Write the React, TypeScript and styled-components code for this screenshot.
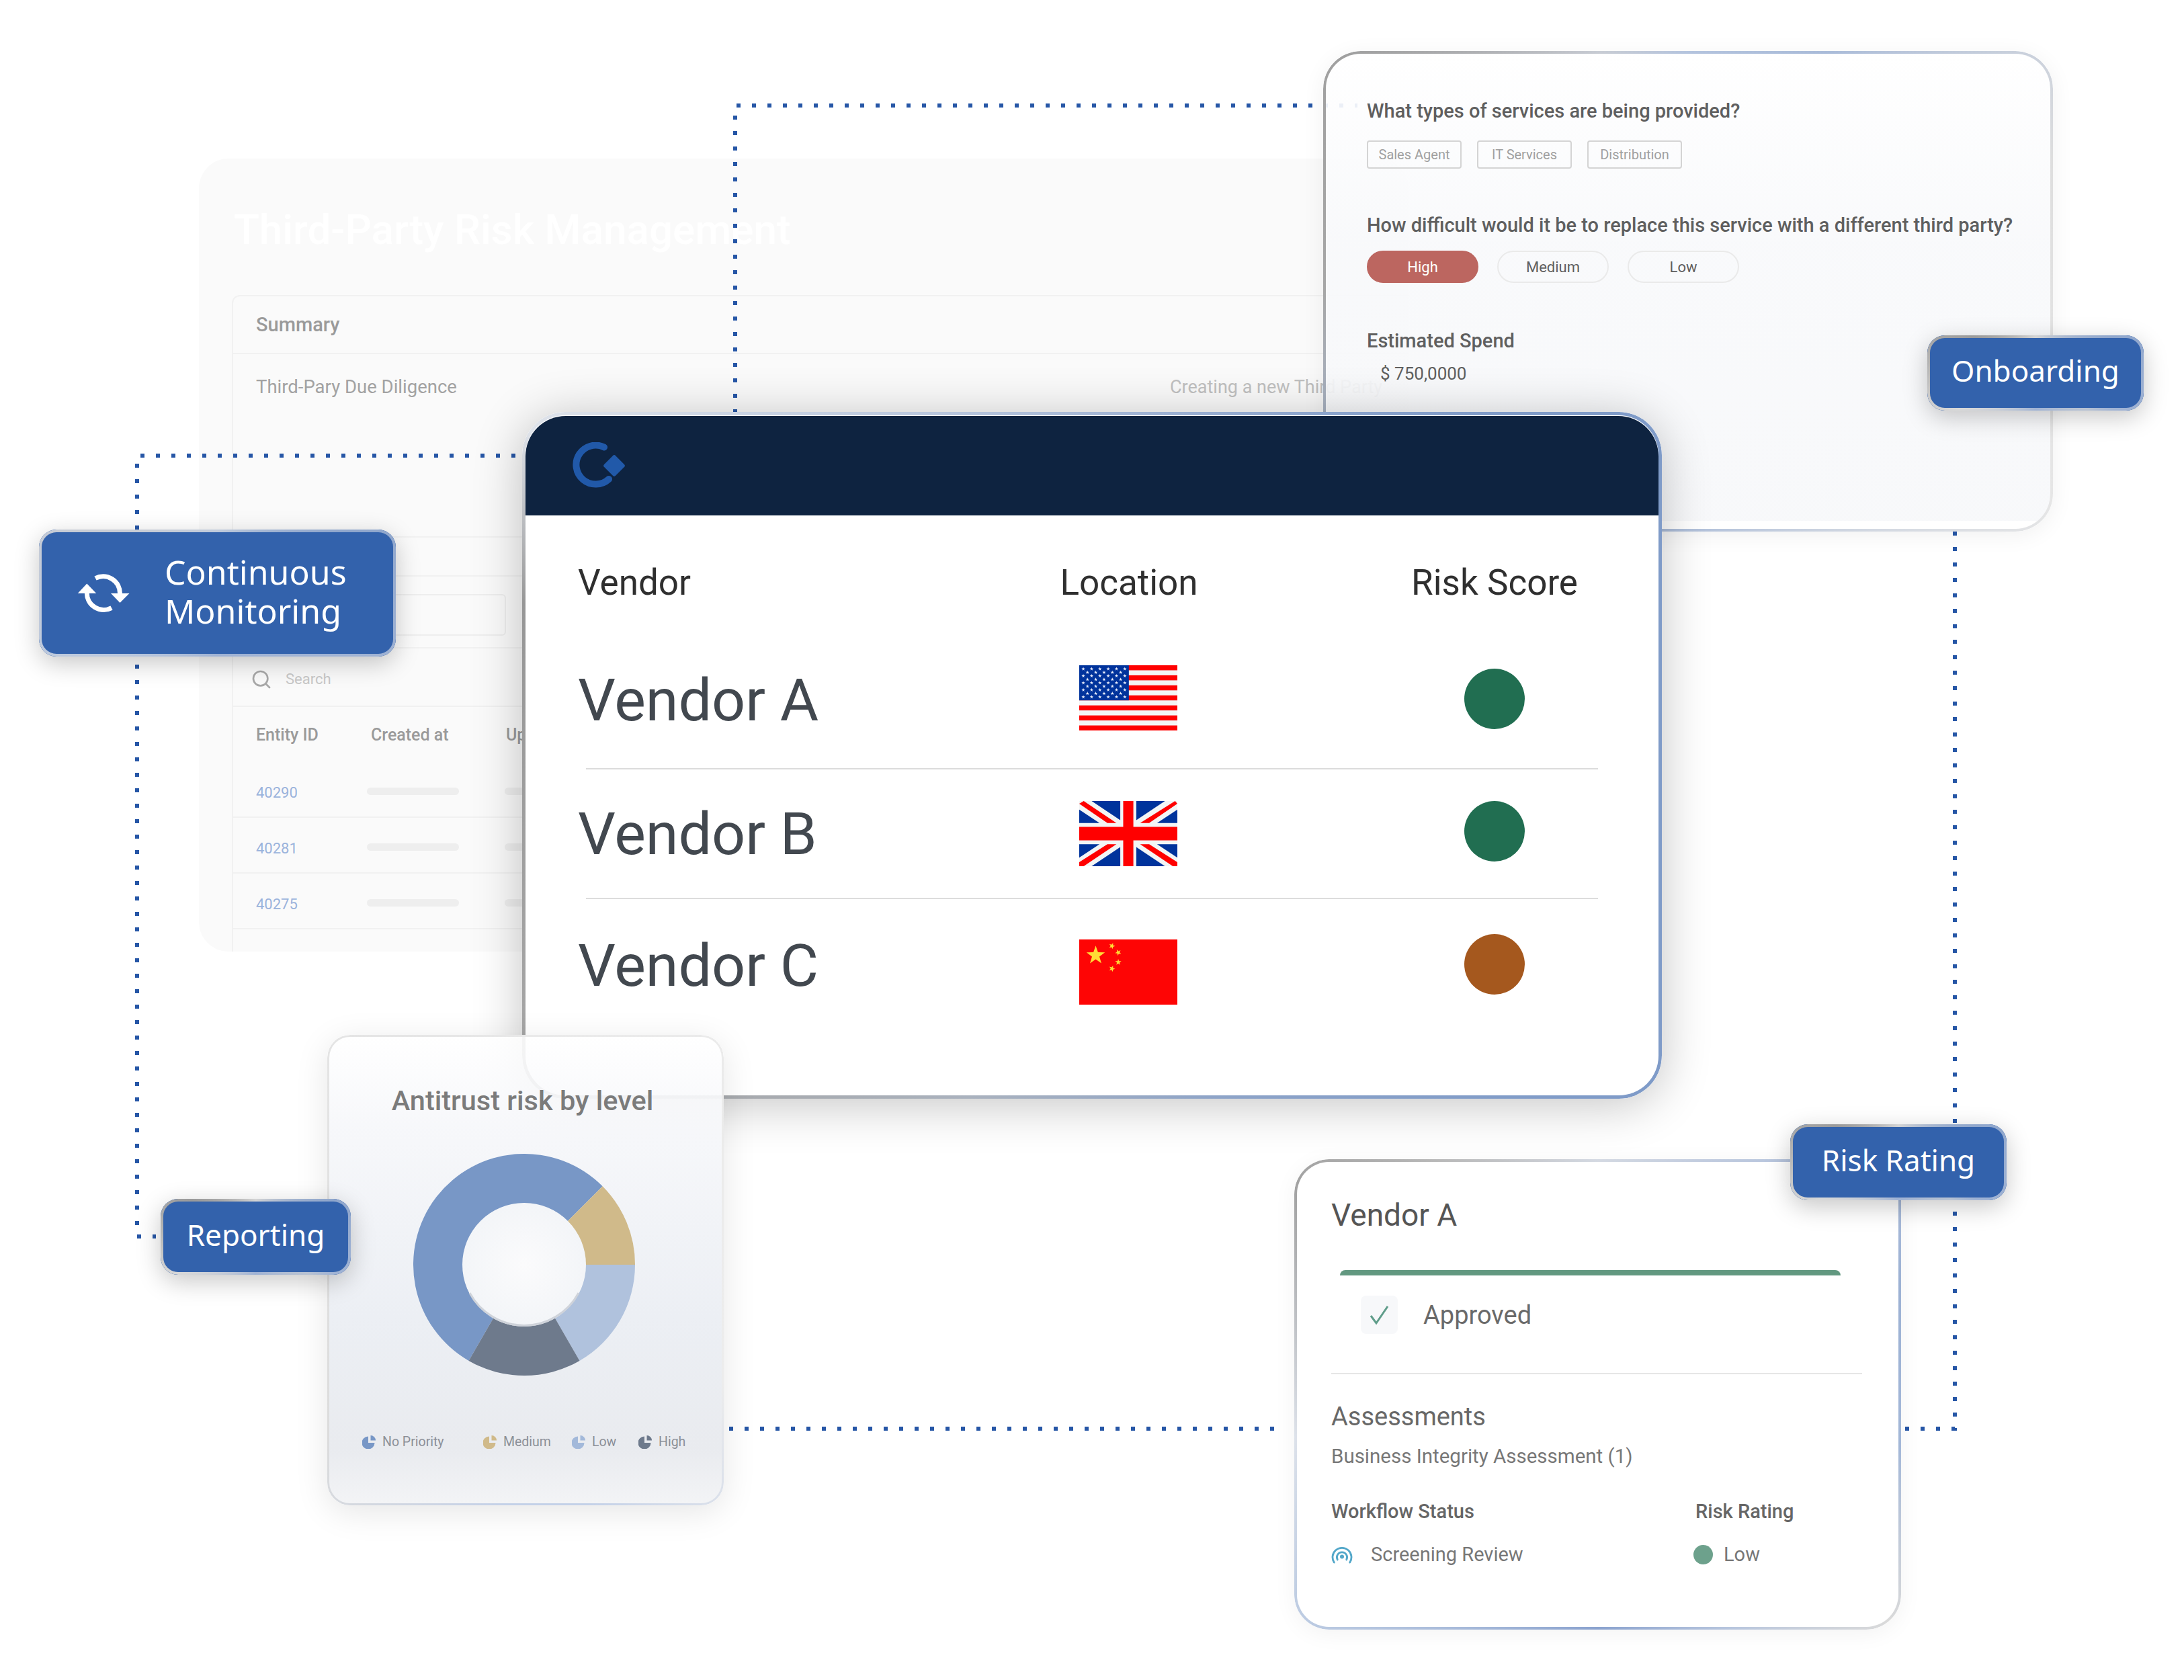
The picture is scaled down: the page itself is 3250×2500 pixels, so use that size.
import React from "react";
import styled, { createGlobalStyle } from "styled-components";
import { Search } from "lucide-react";

const Global = createGlobalStyle`
  html, body { margin: 0; padding: 0; background: #fff; }
  body { font-family: Roboto, "Liberation Sans", sans-serif; }
`;

const Canvas = styled.div`
  position: relative;
  width: 3250px;
  height: 2500px;
  overflow: hidden;
  background: #fff;
`;

/* ---------- free-floating windows on the canvas ---------- */
const Glass = styled.section`
  position: absolute;
  box-sizing: border-box;
  &::before {
    content: "";
    position: absolute;
    inset: 0;
    z-index: 5;
    border-radius: inherit;
    padding: var(--edge-w);
    background: var(--edge);
    mask: linear-gradient(#000 0 0) content-box exclude, linear-gradient(#000 0 0);
    pointer-events: none;
  }
`;

const GhostPanel = styled.section`
  position: absolute;
  left: 296px;
  top: 236px;
  width: 1800px;
  height: 1180px;
  border-radius: 44px;
  background: #fafafa;
  overflow: hidden;
  z-index: 1;
`;
const GhostTitle = styled.h1`
  margin: 0 0 0 52px;
  height: 203px;
  box-sizing: border-box;
  padding-top: 8px;
  display: flex;
  align-items: center;
  font-size: 62px;
  font-weight: 500;
  color: #fff;
`;
const SummaryPanel = styled.div`
  margin-left: 49px;
  height: 1000px;
  border: 2px solid #f1f1f1;
  border-right: 0;
  border-bottom: 0;
  border-top-left-radius: 12px;
`;
const SummaryHead = styled.div`
  height: 84px;
  box-sizing: content-box;
  padding-left: 34px;
  display: flex;
  align-items: center;
  font-size: 29px;
  font-weight: 500;
  color: #9a9a9a;
  border-bottom: 2px solid #f1f1f1;
`;
const SummaryRow = styled.div`
  height: 273px;
  box-sizing: border-box;
  padding: 29px 0 0 34px;
  display: grid;
  grid-template-columns: 1360px 1fr;
  font-size: 27.5px;
  line-height: 40px;
  color: #a2a2a2;
  border-bottom: 2px solid #f1f1f1;
`;
const FaintText = styled.span`
  color: #c0c0c0;
  font-size: 27px;
  white-space: nowrap;
`;
const EmptyBand = styled.div`
  height: 56px;
  border-bottom: 2px solid #f1f1f1;
`;
const InputBand = styled.div`
  height: 107px;
  box-sizing: border-box;
  padding: 26px 0 0 34px;
  border-bottom: 2px solid #f1f1f1;
`;
const GhostInput = styled.div`
  width: 368px;
  height: 58px;
  border: 2px solid #eee;
  border-radius: 6px;
`;
const SearchBand = styled.div`
  height: 87px;
  box-sizing: border-box;
  padding: 6px 0 0 26px;
  display: flex;
  align-items: center;
  gap: 20px;
  font-size: 22px;
  color: #c8c8c8;
  border-bottom: 2px solid #f1f1f1;
`;
const TableHead = styled.div`
  height: 82px;
  box-sizing: border-box;
  padding: 0 0 0 34px;
  display: grid;
  grid-template-columns: 171px 201px 100px;
  align-items: center;
  font-size: 25px;
  font-weight: 500;
  color: #9a9a9a;
`;
const TableRow = styled.div`
  height: 83px;
  box-sizing: border-box;
  padding: 6px 0 0 34px;
  display: grid;
  grid-template-columns: 165px 205px 100px;
  align-items: center;
  font-size: 22px;
  color: #9ab3dc;
  border-bottom: 2px solid #f1f1f1;
`;
const EntityId = styled.span`
  margin-top: 4px;
`;
const GhostBar = styled.div<{ $w: number }>`
  width: ${(p) => p.$w}px;
  height: 11px;
  border-radius: 6px;
  background: #eeeeee;
`;

const Connectors = styled.svg`
  position: absolute;
  left: 0;
  top: 0;
  z-index: 2;
`;

const TopCard = styled(Glass)`
  left: 1969px;
  top: 76px;
  width: 1086px;
  height: 715px;
  padding: 69px 0 0 65px;
  border-radius: 56px;
  z-index: 3;
  --edge-w: 4px;
  --edge: conic-gradient(#b4c4de 0deg, #a9bbd9 30deg, #dedede 70deg, #e6e6e6 120deg, #a8bad8 190deg, #a8bad8 235deg, #a6a6a6 270deg, #a0a0a0 305deg, #c8ccd4 340deg, #b4c4de 360deg);
  background: linear-gradient(to bottom, rgba(255,255,255,.92) 0%, rgba(248,249,251,.9) 40%, rgba(247,248,250,.93) 97.7%, #fff 97.7%);
  box-shadow: 0 6px 34px rgba(0,0,0,.06);
`;
const Question = styled.h3<{ $mt?: number }>`
  margin: ${(p) => p.$mt ?? 0}px 0 0;
  font-size: 29px;
  line-height: 40px;
  font-weight: 500;
  color: #5f5f5f;
  white-space: nowrap;
`;
const ChipRow = styled.div`
  display: flex;
  gap: 23px;
  margin-top: 24px;
`;
const Chip = styled.span`
  width: 141px;
  height: 42px;
  box-sizing: border-box;
  border: 2px solid #d4d4d4;
  border-radius: 4px;
  display: flex;
  align-items: center;
  justify-content: center;
  font-size: 20px;
  color: #a0a0a0;
`;
const PillRow = styled.div`
  display: flex;
  gap: 28px;
  margin-top: 18px;
`;
const Pill = styled.span<{ $active?: boolean }>`
  width: 166px;
  height: 48px;
  box-sizing: border-box;
  border-radius: 24px;
  border: 2px solid ${(p) => (p.$active ? "#bc6660" : "#eaeaea")};
  background: ${(p) => (p.$active ? "#bc6660" : "transparent")};
  color: ${(p) => (p.$active ? "#fff" : "#5f5f5f")};
  display: flex;
  align-items: center;
  justify-content: center;
  font-size: 22px;
`;
const SpendValue = styled.div`
  margin: 11px 0 0 20px;
  font-size: 26px;
  line-height: 36px;
  color: #5f5f5f;
`;

const MainCard = styled(Glass)`
  left: 777px;
  top: 613px;
  width: 1696px;
  height: 1022px;
  padding: 5px;
  border-radius: 64px;
  background: #fff;
  z-index: 4;
  --edge-w: 5px;
  --edge: conic-gradient(#a6b8d6 0deg, #7f9bc8 50deg, #7f9bc8 125deg, #8ea4c8 160deg, #aab2be 200deg, #a6a6a6 240deg, #969696 285deg, #dfe3ea 300deg, #c9d3e3 315deg, #a6b8d6 360deg);
  box-shadow: 0 8px 72px rgba(0,0,0,.24);
`;
const MainHeader = styled.header`
  height: 148px;
  margin-top: 1px;
  background: #0e2340;
  border-radius: 60px 60px 0 0;
  padding-left: 68px;
  display: flex;
  align-items: center;
`;
const VendorGrid = styled.div<{ $h: number }>`
  padding-left: 78px;
  display: grid;
  grid-template-columns: 476px 688px 400px;
  align-items: center;
  height: ${(p) => p.$h}px;
`;
const HeadGrid = styled(VendorGrid)`
  box-sizing: border-box;
  padding-top: 26px;
  font-size: 53px;
  color: #2f2f2f;
`;
const Centered = styled.div`
  display: flex;
  justify-content: center;
  align-items: center;
`;
const VendorName = styled.div`
  font-size: 88px;
  line-height: 100px;
  color: #42484f;
  white-space: nowrap;
`;
const FlagSvg = styled.svg<{ $shift: number }>`
  width: 146px;
  height: 97px;
  margin: ${(p) => p.$shift}px 2px 0 0;
`;
const ScoreDot = styled.div<{ $c: string; $shift: number }>`
  width: 90px;
  height: 90px;
  margin-top: ${(p) => p.$shift}px;
  border-radius: 50%;
  background: ${(p) => p.$c};
`;
const RowDivider = styled.div`
  margin-left: 90px;
  width: 1506px;
  height: 2px;
  background: #dcdcdc;
`;

const ChartCard = styled(Glass)`
  left: 487px;
  top: 1540px;
  width: 590px;
  height: 700px;
  padding: 70px 0 0 3px;
  border-radius: 34px;
  z-index: 5;
  display: flex;
  flex-direction: column;
  align-items: center;
  --edge-w: 3px;
  --edge: conic-gradient(#eaeaea 0deg, #ececec 120deg, #c4d1e8 165deg, #c4d1e8 185deg, #dcdcdc 230deg, #e8e8e8 360deg);
  background: linear-gradient(to bottom, rgba(255,255,255,.88) 0%, rgba(246,247,250,.92) 20%, #eceff4 60%, #e9ebef 88%, #f3f4f6 100%);
  box-shadow: 0 10px 50px rgba(0,0,0,.1);
`;
const ChartTitle = styled.h2`
  margin: 0 12px 0 0;
  font-size: 41.5px;
  line-height: 56px;
  font-weight: 500;
  color: #7b7b7b;
  white-space: nowrap;
`;
const DonutSvg = styled.svg`
  display: block;
  width: 330px;
  height: 330px;
  margin: 51px 0 0 -8px;
`;
const Legend = styled.div`
  margin-top: 84px;
  width: 100%;
  box-sizing: border-box;
  padding-left: 49px;
  display: grid;
  grid-template-columns: 180px 132px 99px auto;
  font-size: 19.5px;
  line-height: 30px;
  color: #8c9098;
`;
const LegendItem = styled.div`
  display: flex;
  align-items: center;
  gap: 10px;
  white-space: nowrap;
`;
const LegendSvg = styled.svg`
  width: 20px;
  height: 20px;
  flex: none;
`;

const VendorCard = styled(Glass)`
  left: 1926px;
  top: 1725px;
  width: 903px;
  height: 700px;
  padding: 53px 0 0 55px;
  border-radius: 52px;
  background: #fff;
  z-index: 3;
  --edge-w: 4px;
  --edge: conic-gradient(#d4d9e2 0deg, #b0c0dc 48deg, #9db2d4 70deg, #a4b8d8 100deg, #dadada 128deg, #b8c6de 150deg, #8ba3cf 180deg, #bccbe2 232deg, #dde2ea 262deg, #a2a2a2 305deg, #b8b8b8 325deg, #d4d9e2 360deg);
  box-shadow: 0 6px 34px rgba(0,0,0,.05);
`;
const CardName = styled.h2`
  margin: 0;
  font-size: 46px;
  line-height: 60px;
  font-weight: 400;
  color: #555;
`;
const StatusBar = styled.div`
  margin: 52px 0 0 13px;
  width: 745px;
  height: 8px;
  border-radius: 8px 8px 0 0;
  background: #629880;
`;
const StatusRow = styled.div`
  margin: 30px 0 0 44px;
  display: flex;
  align-items: center;
  gap: 38px;
  font-size: 38px;
  color: #6a6a6a;
`;
const CheckBox = styled.div`
  width: 55px;
  height: 57px;
  border-radius: 8px;
  background: #f7f8fa;
  display: flex;
  align-items: center;
  justify-content: center;
`;
const CardRule = styled.div`
  margin-top: 58px;
  width: 790px;
  height: 2px;
  background: #e6e6e6;
`;
const SectionTitle = styled.h3`
  margin: 38px 0 0;
  font-size: 38px;
  line-height: 50px;
  font-weight: 400;
  color: #686868;
`;
const SectionSub = styled.div`
  margin-top: 14px;
  font-size: 29.5px;
  line-height: 40px;
  color: #777;
`;
const InfoGrid = styled.div`
  margin-top: 42px;
  display: grid;
  grid-template-columns: 542px auto;
  row-gap: 24px;
  font-size: 29px;
  line-height: 40px;
  color: #777;
`;
const InfoHead = styled.div`
  font-weight: 500;
  color: #666;
`;
const InfoValue = styled.div`
  display: flex;
  align-items: center;
  white-space: nowrap;
`;
const RadarSvg = styled.svg`
  width: 32px;
  height: 27px;
  margin-right: 27px;
`;
const LowDot = styled.span`
  width: 29px;
  height: 29px;
  border-radius: 50%;
  background: #6da18c;
  margin: 0 16px 0 -3px;
`;

/* ---------- blue labels ---------- */
const Label = styled(Glass)`
  border-radius: 26px;
  z-index: 6;
  background: #3362ac;
  color: #fff;
  font-family: "Noto Sans", sans-serif;
  font-size: 44px;
  padding-bottom: 8px;
  display: flex;
  align-items: center;
  justify-content: center;
  white-space: nowrap;
  --edge-w: 4px;
  --edge: conic-gradient(#d4d4d4 0deg, #8fa6cc 65deg, #a0b3d4 115deg, #b8c2d2 125deg, #9fb2d4 180deg, #d8d8d8 245deg, #b4b4b4 275deg, #9a9a9a 300deg, #d4d4d4 360deg);
  box-shadow: 0 10px 36px rgba(0,0,0,.22);
`;
const ContinuousLabel = styled(Label)`
  left: 58px;
  top: 788px;
  width: 531px;
  height: 189px;
  font-size: 50px;
  padding-bottom: 0;
  justify-content: flex-start;
  padding-left: 57px;
  gap: 52px;
  --edge: conic-gradient(#c0cbdc 0deg, #8fa6cc 65deg, #a0b3d4 115deg, #9fb2d4 180deg, #bcc9de 245deg, #c8ccd4 300deg, #c0cbdc 360deg);
`;
const ContinuousText = styled.div`
  line-height: 58px;
  margin-top: -5px;
`;
const OnboardingLabel = styled(Label)`
  left: 2868px;
  top: 499px;
  width: 322px;
  height: 112px;
`;
const RiskLabel = styled(Label)`
  left: 2664px;
  top: 1673px;
  width: 322px;
  height: 113px;
`;
const ReportingLabel = styled(Label)`
  left: 239px;
  top: 1784px;
  width: 283px;
  height: 113px;
`;
const SyncSvg = styled.svg`
  width: 78px;
  height: 58px;
  flex: none;
`;

/* ---------- drawings ---------- */
const starPts = (cx: number, cy: number, r: number, rot = 0) => {
  const pts: string[] = [];
  for (let i = 0; i < 10; i++) {
    const rad = i % 2 === 0 ? r : r * 0.4;
    const a = ((-90 + rot + i * 36) * Math.PI) / 180;
    pts.push(`${(cx + rad * Math.cos(a)).toFixed(1)},${(cy + rad * Math.sin(a)).toFixed(1)}`);
  }
  return pts.join(" ");
};

const USFlag = ({ shift }: { shift: number }) => {
  const stars: React.ReactNode[] = [];
  for (let row = 0; row < 9; row++) {
    const odd = row % 2 === 1;
    for (let c = 0; c < (odd ? 5 : 6); c++) {
      stars.push(
        <polygon key={`${row}-${c}`} points={starPts(18 + (odd ? 18.4 : 0) + 36.8 * c, 16 + 15.6 * row, 8.5)} fill="#e9eefb" />
      );
    }
  }
  return (
    <FlagSvg $shift={shift} viewBox="0 0 435 290" preserveAspectRatio="none">
      <rect width="435" height="290" fill="#f3f5f5" />
      {Array.from({ length: 7 }, (_, i) => (
        <rect key={i} y={(i * 2 * 290) / 13} width="435" height={290 / 13} fill="#ff0000" />
      ))}
      <rect width="220" height="156" fill="#00339c" />
      {stars}
    </FlagSvg>
  );
};

const UKFlag = ({ shift }: { shift: number }) => (
  <FlagSvg $shift={shift} viewBox="0 0 435 290" preserveAspectRatio="none">
    <rect width="435" height="290" fill="#f3f5f5" />
    <g fill="#00339c">
      <polygon points="55,0 182,0 182,85" />
      <polygon points="253,0 380,0 253,85" />
      <polygon points="0,38 90,98 0,98" />
      <polygon points="435,38 345,98 435,98" />
      <polygon points="0,252 90,192 0,192" />
      <polygon points="435,252 345,192 435,192" />
      <polygon points="55,290 182,290 182,205" />
      <polygon points="253,290 380,290 253,205" />
    </g>
    <g fill="#ff0000">
      <polygon points="0,12 20,0 165,98 125,98" />
      <polygon points="425,0 435,12 310,98 270,98" />
      <polygon points="0,272 125,192 165,192 20,290 0,290" />
      <polygon points="270,192 310,192 435,272 435,290 415,290" />
      <rect x="195" width="45" height="290" />
      <rect y="115" width="435" height="60" />
    </g>
  </FlagSvg>
);

const CNFlag = ({ shift }: { shift: number }) => (
  <FlagSvg $shift={shift} viewBox="0 0 435 290" preserveAspectRatio="none">
    <rect width="435" height="290" fill="#fe0505" />
    <g fill="#ffdc35">
      <polygon points={starPts(73, 71, 43)} />
      <polygon points={starPts(145, 29, 14.5, 20)} />
      <polygon points={starPts(173, 58, 14.5, 45)} />
      <polygon points={starPts(173, 101, 14.5, 0)} />
      <polygon points={starPts(145, 130, 14.5, 20)} />
    </g>
  </FlagSvg>
);

const Logo = () => (
  <svg width="82" height="70" viewBox="0 0 82 70" fill="none">
    <path d="M49 7.5 A29 29 0 1 0 56 55" stroke="#2159a9" strokeWidth="10" strokeLinecap="round" />
    <rect x="52" y="23" width="24" height="24" rx="3" transform="rotate(45 64 35)" fill="#2159a9" />
  </svg>
);

const polar = (r: number, deg: number) => {
  const a = ((deg - 90) * Math.PI) / 180;
  return [165 + r * Math.cos(a), 165 + r * Math.sin(a)];
};
const sector = (from: number, to: number) => {
  const [x1, y1] = polar(165, from);
  const [x2, y2] = polar(165, to);
  const [x3, y3] = polar(88, to);
  const [x4, y4] = polar(88, from);
  const large = to - from > 180 ? 1 : 0;
  return `M${x1} ${y1} A165 165 0 ${large} 1 ${x2} ${y2} L${x3} ${y3} A88 88 0 ${large} 0 ${x4} ${y4} Z`;
};

const Donut = () => (
  <DonutSvg viewBox="0 0 330 330">
    <defs>
      <radialGradient id="hole">
        <stop offset="0%" stopColor="#fbfbfc" />
        <stop offset="100%" stopColor="#f3f5f8" />
      </radialGradient>
    </defs>
    <path d={sector(210, 405)} fill="#7897c6" />
    <path d={sector(45, 90)} fill="#d0ba8a" />
    <path d={sector(90, 150)} fill="#b0c2dd" />
    <path d={sector(150, 210)} fill="#6e7a8c" />
    <circle cx="165" cy="165" r="92" fill="url(#hole)" />
    <path d="M84 207 A92 92 0 0 0 246 207" fill="none" stroke="#cfd3da" strokeWidth="3" />
  </DonutSvg>
);

const PieMark = ({ c }: { c: string }) => (
  <LegendSvg viewBox="0 0 20 20" fill={c}>
    <path d="M9 1.5 A9.5 9.5 0 1 0 18.5 11 H9 Z" />
    <path d="M12.5 0 A7.5 7.5 0 0 1 20 7.5 H12.5 Z" />
  </LegendSvg>
);

const Sync = () => (
  <SyncSvg viewBox="0 0 78 58" fill="none">
    <path d="M27 6.5 A25 25 0 0 1 63.5 29" stroke="#fff" strokeWidth="7" />
    <path d="M14.3 28 A25 25 0 0 0 51 50.6" stroke="#fff" strokeWidth="7" />
    <polygon points="0.7,29 28.3,29 14.3,14.5" fill="#fff" />
    <polygon points="50,29 77.5,29 63.5,43" fill="#fff" />
  </SyncSvg>
);

const Check = () => (
  <svg width="32" height="32" viewBox="0 0 32 32" fill="none">
    <path d="M3 17 L11 28 L28 3" stroke="#5f9d8a" strokeWidth="3" />
  </svg>
);

const Radar = () => (
  <RadarSvg viewBox="0 0 32 27" fill="none" stroke="#52a7c9" strokeWidth="2.8" strokeLinecap="round">
    <path d="M4.3 25 A14 14 0 1 1 27.7 25" />
    <path d="M9.3 21 A7.6 7.6 0 1 1 22.7 21" />
    <circle cx="16" cy="16.5" r="3" fill="#52a7c9" stroke="none" />
  </RadarSvg>
);

const dotted = { stroke: "#2656a6", strokeWidth: 6, strokeDasharray: "6 17", fill: "none" };

export default function App() {
  return (
    <Canvas>
      <Global />

      <GhostPanel>
        <GhostTitle>Third-Party Risk Management</GhostTitle>
        <SummaryPanel>
          <SummaryHead>Summary</SummaryHead>
          <SummaryRow>
            <span>Third-Pary Due Diligence</span>
            <FaintText>Creating a new Third Party</FaintText>
          </SummaryRow>
          <EmptyBand />
          <InputBand>
            <GhostInput />
          </InputBand>
          <SearchBand>
            <Search size={32} color="#a8a8a8" strokeWidth={2} />
            <span>Search</span>
          </SearchBand>
          <TableHead>
            <span>Entity ID</span>
            <span>Created at</span>
            <span>Updated</span>
          </TableHead>
          <TableRow>
            <EntityId>40290</EntityId>
            <GhostBar $w={137} />
            <GhostBar $w={80} />
          </TableRow>
          <TableRow>
            <EntityId>40281</EntityId>
            <GhostBar $w={137} />
            <GhostBar $w={80} />
          </TableRow>
          <TableRow>
            <EntityId>40275</EntityId>
            <GhostBar $w={137} />
            <GhostBar $w={80} />
          </TableRow>
        </SummaryPanel>
      </GhostPanel>

      <Connectors width="3250" height="2500" viewBox="0 0 3250 2500">
        <path d="M1094 615 V157 H2020" {...dotted} />
        <path d="M767 678 H204 V1840 H232" {...dotted} />
        <path d="M1085 2126 H1900" {...dotted} />
        <path d="M2909 791 V2126 H2820" {...dotted} />
      </Connectors>

      <TopCard>
        <Question>What types of services are being provided?</Question>
        <ChipRow>
          <Chip>Sales Agent</Chip>
          <Chip>IT Services</Chip>
          <Chip>Distribution</Chip>
        </ChipRow>
        <Question $mt={64}>How difficult would it be to replace this service with a different third party?</Question>
        <PillRow>
          <Pill $active>High</Pill>
          <Pill>Medium</Pill>
          <Pill>Low</Pill>
        </PillRow>
        <Question $mt={66}>Estimated Spend</Question>
        <SpendValue>$ 750,0000</SpendValue>
      </TopCard>

      <MainCard>
        <MainHeader>
          <Logo />
        </MainHeader>
        <HeadGrid $h={174}>
          <span>Vendor</span>
          <Centered>Location</Centered>
          <Centered>Risk Score</Centered>
        </HeadGrid>
        <VendorGrid $h={202}>
          <VendorName>Vendor A</VendorName>
          <Centered>
            <USFlag shift={-8} />
          </Centered>
          <Centered>
            <ScoreDot $c="#216e51" $shift={-4} />
          </Centered>
        </VendorGrid>
        <RowDivider />
        <VendorGrid $h={191}>
          <VendorName>Vendor B</VendorName>
          <Centered>
            <UKFlag shift={0} />
          </Centered>
          <Centered>
            <ScoreDot $c="#216e51" $shift={-7} />
          </Centered>
        </VendorGrid>
        <RowDivider />
        <VendorGrid $h={197}>
          <VendorName>Vendor C</VendorName>
          <Centered>
            <CNFlag shift={20} />
          </Centered>
          <Centered>
            <ScoreDot $c="#a5581e" $shift={-4} />
          </Centered>
        </VendorGrid>
      </MainCard>

      <ChartCard>
        <ChartTitle>Antitrust risk by level</ChartTitle>
        <Donut />
        <Legend>
          <LegendItem>
            <PieMark c="#7897c6" />
            No Priority
          </LegendItem>
          <LegendItem>
            <PieMark c="#d0ba8a" />
            Medium
          </LegendItem>
          <LegendItem>
            <PieMark c="#a3b9da" />
            Low
          </LegendItem>
          <LegendItem>
            <PieMark c="#6e7a8c" />
            High
          </LegendItem>
        </Legend>
      </ChartCard>

      <VendorCard>
        <CardName>Vendor A</CardName>
        <StatusBar />
        <StatusRow>
          <CheckBox>
            <Check />
          </CheckBox>
          Approved
        </StatusRow>
        <CardRule />
        <SectionTitle>Assessments</SectionTitle>
        <SectionSub>Business Integrity Assessment (1)</SectionSub>
        <InfoGrid>
          <InfoHead>Workflow Status</InfoHead>
          <InfoHead>Risk Rating</InfoHead>
          <InfoValue>
            <Radar />
            Screening Review
          </InfoValue>
          <InfoValue>
            <LowDot />
            Low
          </InfoValue>
        </InfoGrid>
      </VendorCard>

      <ContinuousLabel>
        <Sync />
        <ContinuousText>
          Continuous
          <br />
          Monitoring
        </ContinuousText>
      </ContinuousLabel>
      <OnboardingLabel>Onboarding</OnboardingLabel>
      <RiskLabel>Risk Rating</RiskLabel>
      <ReportingLabel>Reporting</ReportingLabel>
    </Canvas>
  );
}
